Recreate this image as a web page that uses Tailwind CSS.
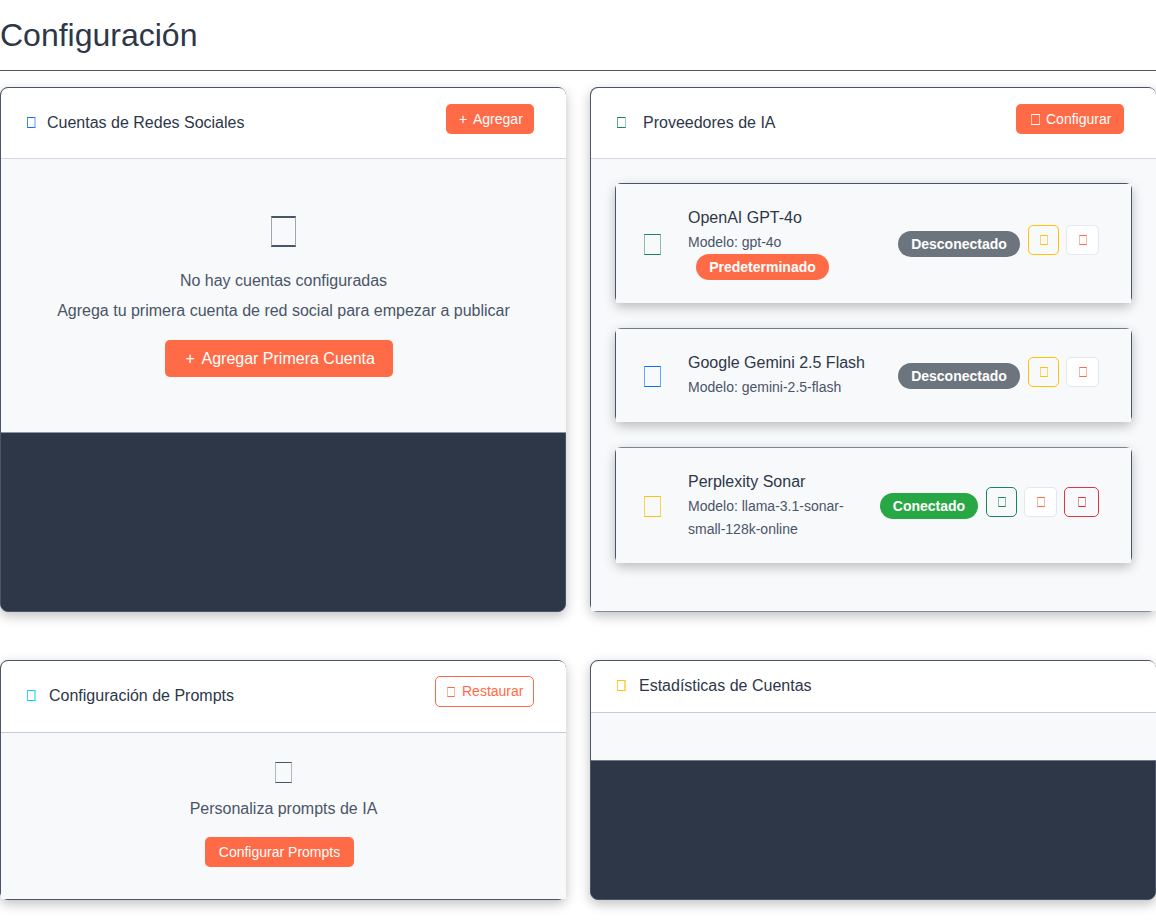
<!DOCTYPE html>
<html lang="es">
<head>
<meta charset="utf-8">
<title>Configuración</title>
<script src="https://cdn.jsdelivr.net/npm/@tailwindcss/browser@4"></script>
</head>
<body class="h-[924px] overflow-hidden bg-white font-['Liberation_Sans',Arial,sans-serif] text-base text-[#2d3748]">
<h1 class="h-[70px] pt-[15px] text-[32px] leading-10">Configuración</h1>
<hr class="mb-4 border-t border-[#4f5761]">
<main class="grid grid-cols-2 grid-rows-[525px_240px] gap-x-6 gap-y-[48px]">

  <!-- Cuentas -->
  <section class="flex flex-col rounded-lg border border-[#4a5568] bg-[#2d3748] shadow-[0_4px_12px_rgba(0,0,0,0.25)]">
    <header class="-mr-px flex h-[71px] shrink-0 items-start justify-between rounded-t-[7px] border-b border-[#d3d9e2] bg-white pt-4 pr-8 pl-[26px]">
      <h2 class="flex h-9 items-center"><i class="h-[11px] w-[9px] border border-r-2 border-r-[#0d6efd]/35 border-l-[#0d6efd]/80 border-y-[#0d6efd]"></i><span class="mt-[2px] ml-[11px]">Cuentas de Redes Sociales</span></h2>
      <button class="flex h-[30px] w-[88px] items-center rounded-[5px] bg-[#ff6b47] pl-[13px] text-left text-sm text-white"><span class="w-[14px]">+</span>Agregar</button>
    </header>
    <div class="-mr-px flex h-[274px] flex-col items-center border-b border-[#8d949f] bg-[#f8f9fb] pt-[57px] text-[#4a5568]">
      <i class="h-[31px] w-[25px] border-x border-y-2 border-x-[#4a5568]/50 border-y-[#4a5568]"></i>
      <p class="mt-[21px] leading-[26px]">No hay cuentas configuradas</p>
      <p class="mt-1 leading-[26px]">Agrega tu primera cuenta de red social para empezar a publicar</p>
      <button class="mt-4 mr-[10px] flex h-[37px] w-[228px] items-center rounded-[5px] bg-[#ff6b47] pl-[21px] text-left text-white"><span class="w-4">+</span>Agregar Primera Cuenta</button>
    </div>
  </section>

  <!-- Proveedores -->
  <section class="flex flex-col rounded-lg border border-[#4a5568] border-b-[#858c9a] bg-[#2d3748] shadow-[0_4px_12px_rgba(0,0,0,0.25)]">
    <header class="-mr-px flex h-[71px] shrink-0 items-start justify-between rounded-t-[7px] border-b border-[#d3d9e2] bg-white pt-4 pr-8 pl-[26px]">
      <h2 class="flex h-9 items-center"><i class="h-[11px] w-[9px] border border-r-[#198754]/40 border-l-[#198754]/70 border-y-[#198754]"></i><span class="mt-[2px] ml-[17px]">Proveedores de IA</span></h2>
      <button class="flex h-[30px] w-[108px] items-center rounded-[5px] bg-[#ff6b47] pl-[15px] text-left text-sm text-white"><i class="mr-[6px] h-[11px] w-[9px] border border-x-white/60 border-y-white"></i>Configurar</button>
    </header>
    <div class="-mr-px flex grow flex-col bg-[#f8f9fb] px-6 pt-6">
      <article class="h-[120px] rounded-md border border-[#4a5568] shadow-[0_4px_12px_rgba(0,0,0,0.25)]">
        <div class="-mb-px flex h-[119px] items-start bg-[#f8f9fb] pl-7">
          <i class="mt-[50px] h-[21px] w-[17px] shrink-0 border border-x-[#198754]/50 border-y-[#198754]"></i>
          <div class="ml-[27px] w-[210px] pt-[21px]">
            <h3 class="leading-[26px]">OpenAI GPT-4o</h3>
            <p class="text-sm leading-[23px] text-[#4a5568]">Modelo: gpt-4o</p>
            <span class="ml-2 flex h-[26px] w-[133px] items-center justify-center rounded-full bg-[#ff6b47] text-sm font-bold text-white">Predeterminado</span>
          </div>
          <span class="mt-[47px] flex h-[26px] w-[122px] items-center justify-center rounded-full bg-[#6c757d] text-sm font-bold text-white">Desconectado</span>
          <button class="mt-[41px] ml-2 grid h-[30px] w-[31px] place-items-center rounded-[5px] border border-[#ffc107]"><i class="h-[10px] w-2 border border-x-[#ffc107]/60 border-y-[#ffc107]"></i></button>
          <button class="mt-[41px] ml-[7px] grid h-[30px] w-[33px] place-items-center rounded-[5px] border border-[#e2e8f0] bg-white"><i class="h-[10px] w-2 border border-x-[#ff6b47]/50 border-y-[#ff6b47]"></i></button>
        </div>
      </article>
      <article class="mt-[25px] h-[94px] rounded-md border border-[#4a5568] border-t-[#727b8a] shadow-[0_4px_12px_rgba(0,0,0,0.25)]">
        <div class="-mb-px flex h-[93px] items-start bg-[#f8f9fb] pl-7">
          <i class="mt-[37px] h-[21px] w-[17px] shrink-0 border border-x-[#0d6efd]/60 border-y-[#0d6efd]"></i>
          <div class="ml-[27px] w-[210px] pt-[21px]">
            <h3 class="leading-[26px]">Google Gemini 2.5 Flash</h3>
            <p class="text-sm leading-[23px] text-[#4a5568]">Modelo: gemini-2.5-flash</p>
          </div>
          <span class="mt-[34px] flex h-[26px] w-[122px] items-center justify-center rounded-full bg-[#6c757d] text-sm font-bold text-white">Desconectado</span>
          <button class="mt-[28px] ml-2 grid h-[30px] w-[31px] place-items-center rounded-[5px] border border-[#ffc107]"><i class="h-[10px] w-2 border border-x-[#ffc107]/60 border-y-[#ffc107]"></i></button>
          <button class="mt-[28px] ml-[7px] grid h-[30px] w-[33px] place-items-center rounded-[5px] border border-[#e2e8f0] bg-white"><i class="h-[10px] w-2 border border-x-[#ff6b47]/50 border-y-[#ff6b47]"></i></button>
        </div>
      </article>
      <article class="mt-[25px] h-[116px] rounded-md border border-[#4a5568] border-t-[#7c8594] shadow-[0_4px_12px_rgba(0,0,0,0.25)]">
        <div class="-mb-px flex h-[115px] items-start bg-[#f8f9fb] pl-7">
          <i class="mt-[48px] h-[21px] w-[17px] shrink-0 border border-x-[#ffc107]/70 border-y-[#ffc107]"></i>
          <div class="ml-[27px] w-[192px] pt-[21px]">
            <h3 class="leading-[26px]">Perplexity Sonar</h3>
            <p class="text-sm leading-[23px] text-[#4a5568]">Modelo: llama-3.1-sonar-<br>small-128k-online</p>
          </div>
          <span class="mt-[45px] flex h-[26px] w-[98px] items-center justify-center rounded-full bg-[#28a745] text-sm font-bold text-white">Conectado</span>
          <button class="mt-[39px] ml-2 grid h-[30px] w-[31px] place-items-center rounded-[5px] border border-[#198754]"><i class="h-[10px] w-2 border border-x-[#198754]/50 border-y-[#198754]"></i></button>
          <button class="mt-[39px] ml-[7px] grid h-[30px] w-[33px] place-items-center rounded-[5px] border border-[#e2e8f0] bg-white"><i class="h-[10px] w-2 border border-x-[#ff6b47]/50 border-y-[#ff6b47]"></i></button>
          <button class="mt-[39px] ml-[7px] grid h-[30px] w-[35px] place-items-center rounded-[5px] border border-[#dc3545]"><i class="h-[10px] w-2 border border-x-[#dc3545]/50 border-y-[#dc3545]"></i></button>
        </div>
      </article>
    </div>
  </section>

  <!-- Prompts -->
  <section class="flex flex-col rounded-lg border border-[#4a5568] bg-[#2d3748] shadow-[0_4px_12px_rgba(0,0,0,0.25)]">
    <header class="-mr-px flex h-[72px] shrink-0 items-start justify-between rounded-t-[7px] border-b border-[#c5cbd4] bg-white pt-[15px] pr-8 pl-[26px]">
      <h2 class="flex h-[39px] items-center"><i class="h-[11px] w-[9px] border border-r-2 border-r-[#0dcaf0]/50 border-l-[#0dcaf0]/80 border-y-[#0dcaf0]"></i><span class="mt-px ml-[13px]">Configuración de Prompts</span></h2>
      <button class="flex h-[31px] w-[99px] items-center rounded-[5px] border border-[#ff6b47] pl-[11px] text-left text-sm text-[#ff6b47]"><i class="mr-[7px] h-[10px] w-2 border border-x-[#ff6b47]/50 border-y-[#ff6b47]"></i><span class="mb-[2px]">Restaurar</span></button>
    </header>
    <div class="-mr-px flex grow flex-col items-center bg-[#f8f9fb] pt-[29px] text-[#4a5568]">
      <i class="h-[21px] w-[17px] border border-x-[#4a5568]/40 border-y-[#4a5568]"></i>
      <p class="mt-[13px] leading-[26px]">Personaliza prompts de IA</p>
      <button class="mt-[15px] mr-2 h-[30px] w-[149px] rounded-[5px] bg-[#ff6b47] text-sm text-white">Configurar Prompts</button>
    </div>
  </section>

  <!-- Estadísticas -->
  <section class="flex flex-col rounded-lg border border-[#4a5568] bg-[#2d3748] shadow-[0_4px_12px_rgba(0,0,0,0.25)]">
    <header class="-mr-px flex h-[52px] shrink-0 items-center rounded-t-[7px] border-b border-[#c5cbd4] bg-white pl-[26px]">
      <i class="mb-[2px] h-[11px] w-[9px] border border-r-2 border-r-[#ffc107]/60 border-l-[#ffc107]/80 border-y-[#ffc107]"></i><h2 class="mb-[2px] ml-[13px]">Estadísticas de Cuentas</h2>
    </header>
    <div class="-mr-px h-[48px] border-b border-[#6f7887] bg-[#f8f9fb]"></div>
  </section>
</main>
</body>
</html>
